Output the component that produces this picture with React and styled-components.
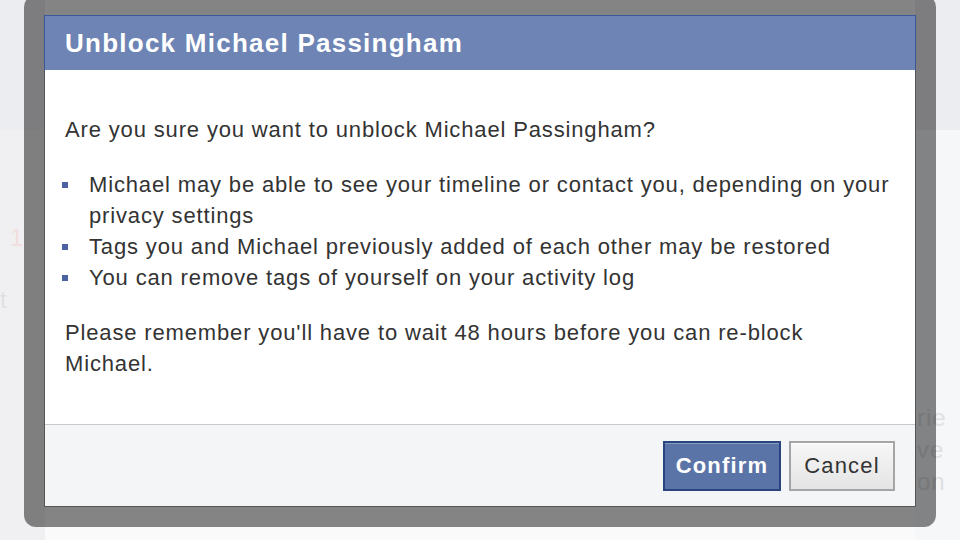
import React from 'react';
import styled, { createGlobalStyle } from 'styled-components';

const GlobalStyle = createGlobalStyle`
  html, body {
    margin: 0;
    padding: 0;
  }
  body {
    font-family: 'Liberation Sans', Arial, sans-serif;
    background: #f2f2f4;
  }
`;

// ------------------ DATA ------------------
const bullets = [
  'Michael may be able to see your timeline or contact you, depending on your privacy settings',
  'Tags you and Michael previously added of each other may be restored',
  'You can remove tags of yourself on your activity log',
];

// ------------------ COMPONENT ------------------
const App = () => {
  return (
    <>
      <GlobalStyle />
      <Page>
        <SideColumn>
          <FaintTop />
          <FaintText $top={224} $left={10} $color='#f1dede'>1</FaintText>
          <FaintText $top={286} $left={0}>t</FaintText>
        </SideColumn>
        <MainColumn />
        <SideColumn $right>
          <FaintTop />
          <FaintText $top={404} $left={2}>rie</FaintText>
          <FaintText $top={436} $left={2}>ve</FaintText>
          <FaintText $top={468} $left={2}>on</FaintText>
        </SideColumn>

        <Frame>
          <Dialog>
            <Header>
              <Title>Unblock Michael Passingham</Title>
            </Header>
            <Body>
              <Paragraph>
                Are you sure you want to unblock Michael Passingham?
              </Paragraph>
              <List>
                {bullets.map((item, index) => (
                  <Item key={index}>{item}</Item>
                ))}
              </List>
              <Paragraph>
                Please remember you'll have to wait 48 hours before you can
                re-block Michael.
              </Paragraph>
            </Body>
            <Footer>
              <Button $primary type='button'>
                Confirm
              </Button>
              <Button type='button'>Cancel</Button>
            </Footer>
          </Dialog>
        </Frame>
      </Page>
    </>
  );
};

// ------------------ STYLE ------------------
const Page = styled.div`
  position: relative;
  width: 960px;
  height: 540px;
  overflow: hidden;
  display: grid;
  grid-template-columns: 45px 1fr 45px;
  background: #f1f1f3;
`;

const SideColumn = styled.div`
  position: relative;
  background: ${(p) => (p.$right ? '#f6f7f9' : '#f0f0f2')};
`;

const FaintTop = styled.div`
  height: 130px;
  background: #ecedf0;
`;

const FaintText = styled.span`
  position: absolute;
  top: ${(p) => p.$top}px;
  left: ${(p) => p.$left}px;
  font-size: 24px;
  letter-spacing: 1px;
  color: ${(p) => p.$color || '#dfe0e3'};
`;

const MainColumn = styled.div`
  background: #fafafb;
`;

const Frame = styled.div`
  position: absolute;
  left: 24px;
  top: -5px;
  width: 872px;
  padding: 20px;
  border-radius: 12px;
  background: rgba(0, 0, 0, 0.47);
`;

const Dialog = styled.div`
  display: flex;
  flex-direction: column;
  border: 1px solid #555;
  border-top: none;
  background: #fff;
`;

const Header = styled.div`
  height: 54px;
  display: flex;
  align-items: center;
  padding: 0 20px;
  background: #6d84b4;
  border: 1px solid #3b5998;
  border-bottom: none;
  margin: 0 -1px;
`;

const Title = styled.h2`
  margin: 0;
  font-size: 26px;
  letter-spacing: 1.25px;
  font-weight: bold;
  color: #fff;
`;

const Body = styled.div`
  height: 354px;
  box-sizing: border-box;
  padding: 44px 20px 0;
  color: #333;
  font-size: 22px;
  letter-spacing: 0.85px;
  line-height: 31px;
`;

const Paragraph = styled.p`
  margin: 0;
`;

const List = styled.ul`
  list-style: none;
  margin: 24px 0 24px;
  padding: 0;
`;

const Item = styled.li`
  position: relative;
  padding-left: 24px;
  &::before {
    content: '';
    position: absolute;
    left: -3px;
    top: 13px;
    width: 6px;
    height: 6px;
    background: #4b63a2;
  }
`;

const Footer = styled.div`
  display: flex;
  justify-content: flex-end;
  gap: 8px;
  padding: 16px 20px 15px;
  background: #f4f5f7;
  border-top: 1px solid #c9c9c9;
`;

const Button = styled.button`
  width: ${(p) => (p.$primary ? '118px' : '106px')};
  height: 50px;
  padding: 0;
  font-family: 'Liberation Sans', Arial, sans-serif;
  font-size: 22px;
  letter-spacing: 1.2px;
  font-weight: ${(p) => (p.$primary ? 'bold' : 'normal')};
  color: ${(p) => (p.$primary ? '#fff' : '#333')};
  background: ${(p) =>
    p.$primary ? '#5b74a8' : 'linear-gradient(#f7f7f7, #e4e4e4)'};
  border: 2px solid ${(p) => (p.$primary ? '#29447e' : '#a5a5a5')};
  box-shadow: ${(p) =>
    p.$primary ? 'inset 0 1px 0 #8a9cc2' : 'inset 0 1px 0 #fff'};
  cursor: pointer;
`;

// ------------------ EXPORT ------------------
export default App;
